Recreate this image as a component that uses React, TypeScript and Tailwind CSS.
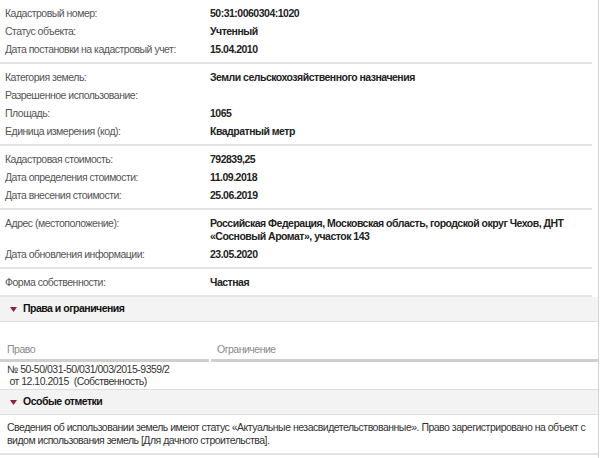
import type { ReactNode } from 'react';

type Row = { label: string; value?: ReactNode };

const sections: Row[][] = [
  [
    { label: 'Кадастровый номер:', value: '50:31:0060304:1020' },
    { label: 'Статус объекта:', value: 'Учтенный' },
    { label: 'Дата постановки на кадастровый учет:', value: '15.04.2010' },
  ],
  [
    { label: 'Категория земель:', value: 'Земли сельскохозяйственного назначения' },
    { label: 'Разрешенное использование:' },
    { label: 'Площадь:', value: '1065' },
    { label: 'Единица измерения (код):', value: 'Квадратный метр' },
  ],
  [
    { label: 'Кадастровая стоимость:', value: '792839,25' },
    { label: 'Дата определения стоимости:', value: '11.09.2018' },
    { label: 'Дата внесения стоимости:', value: '25.06.2019' },
  ],
  [
    {
      label: 'Адрес (местоположение):',
      value: (
        <>
          Российская Федерация, Московская область, городской округ Чехов, ДНТ
          <br />
          «Сосновый Аромат», участок 143
        </>
      ),
    },
    { label: 'Дата обновления информации:', value: '23.05.2020' },
  ],
  [{ label: 'Форма собственности:', value: 'Частная' }],
];

function SectionHeader({ title }: { title: string }) {
  return (
    <div className="flex items-center h-[25px] bg-[#f3f3f3] border-b border-[#dedede] pl-[10px]">
      <svg width="7" height="5" viewBox="0 0 7 5" className="mr-[6px]">
        <path d="M0 0 L7 0 L3.5 5 Z" fill="#8e1f45" />
      </svg>
      <span className="font-bold text-[#111]">{title}</span>
    </div>
  );
}

export default function App() {
  return (
    <div
      className="w-[600px] h-[458px] bg-white overflow-hidden text-[10.5px] tracking-[-0.5px]"
      style={{ fontFamily: '"Liberation Sans", Arial, sans-serif' }}
    >
      <div className="w-[599px] h-full border-r border-[#d4d4d4]">
        {sections.map((rows, i) => (
          <div key={i} className="mr-[6px] border-b-2 border-[#e4e4e4] py-[4px]">
            {rows.map((r) => (
              <div key={r.label} className="flex py-[2.5px] leading-[13px] whitespace-nowrap">
                <div className="w-[210px] pl-[5px] text-[#555]">{r.label}</div>
                <div className="flex-1 font-bold text-[#222]">{r.value}</div>
              </div>
            ))}
          </div>
        ))}

        <SectionHeader title="Права и ограничения" />

        <div className="flex pt-[21px] leading-[13px] text-[#8a8a8a]">
          <div className="w-[209px] pl-[7px] pb-[3px] border-b-[3px] border-[#cfcfcf]">Право</div>
          <div className="flex-1 ml-[2px] pl-[6px] pb-[3px] border-b-[3px] border-[#cfcfcf]">
            Ограничение
          </div>
        </div>
        <div className="border-b border-[#dedede] pl-[7px] pt-[1px] pb-[2px] leading-[12px] text-[#333]">
          № 50-50/031-50/031/003/2015-9359/2
          <br />
          <span className="whitespace-pre"> от 12.10.2015  (Собственность)</span>
        </div>

        <SectionHeader title="Особые отметки" />

        <div className="border-b-2 border-[#e4e4e4] pl-[7px] pt-[6px] pb-[6px] leading-[13px] text-[#333] whitespace-nowrap">
          Сведения об использовании земель имеют статус «Актуальные незасвидетельствованные». Право
          зарегистрировано на объект с
          <br />
          видом использования земель [Для дачного строительства].
        </div>
      </div>
    </div>
  );
}
